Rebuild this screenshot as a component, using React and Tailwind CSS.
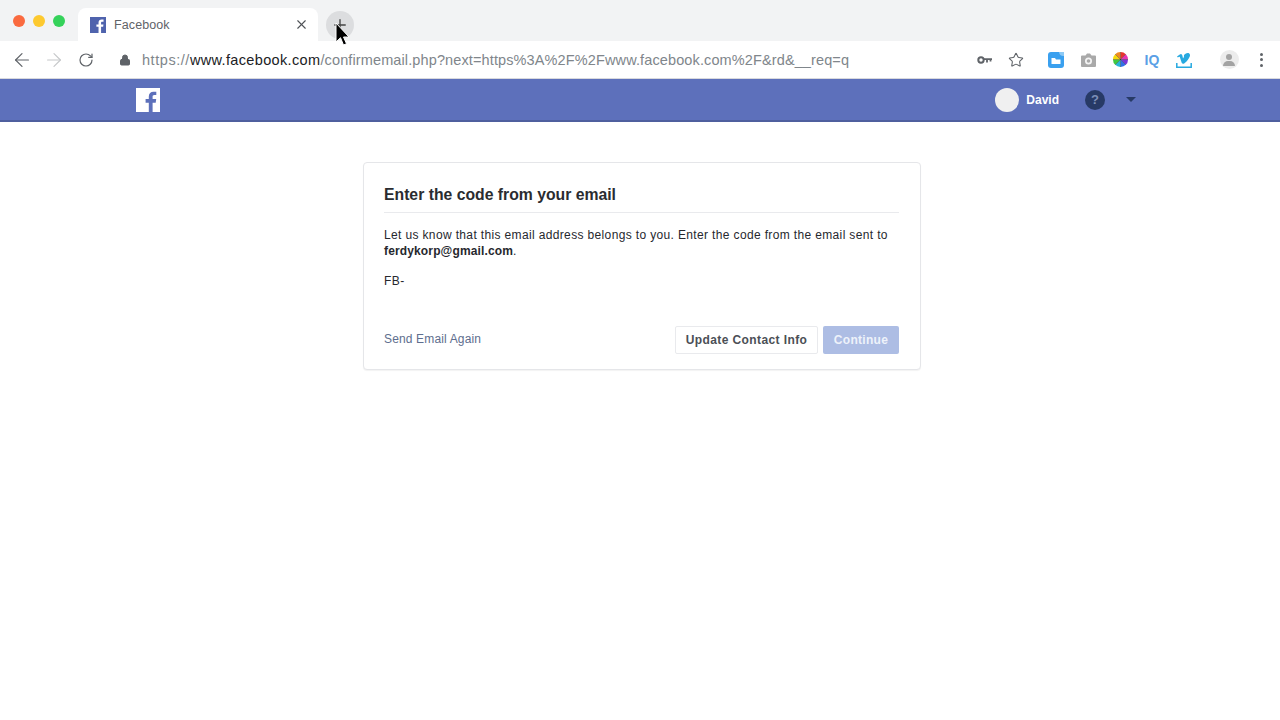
import React from "react";
import { ArrowLeft, ArrowRight, RotateCw, Lock, Star, X, Plus } from "lucide-react";

const sans = "font-['Liberation_Sans',Arial,sans-serif]";

const FbGlyph = ({ className, color }) => (
  <svg viewBox="0 0 24 24" className={className}>
    <rect width="24" height="24" fill="currentColor" />
    <path
      d="M16.600 24v-9.300h3.100l.5-3.600h-3.600V8.800c0-1 .3-1.800 1.800-1.800h1.900V3.800c-.3 0-1.500-.1-2.800-.1-2.800 0-4.700 1.700-4.700 4.800v2.600H9.600v3.600h3.200V24z"
      fill={color}
    />
  </svg>
);

const ColorWheel = () => (
  <svg viewBox="0 0 16 16" className="w-[15px] h-[15px]">
    <path d="M8 8V0a8 8 0 0 1 5.700 2.300z" fill="#e8342f" />
    <path d="M8 8l5.700-5.700A8 8 0 0 1 16 8z" fill="#e834b4" />
    <path d="M8 8h8a8 8 0 0 1-2.300 5.700z" fill="#7a35d8" />
    <path d="M8 8l5.700 5.700A8 8 0 0 1 8 16z" fill="#2f6fe8" />
    <path d="M8 8v8a8 8 0 0 1-5.700-2.300z" fill="#27b5d8" />
    <path d="M8 8l-5.700 5.700A8 8 0 0 1 0 8z" fill="#3fc83f" />
    <path d="M8 8H0a8 8 0 0 1 2.300-5.700z" fill="#f5d90a" />
    <path d="M8 8L2.300 2.300A8 8 0 0 1 8 0z" fill="#f08a24" />
    <path d="M8 0v16M0 8h16M2.300 2.300l11.400 11.400M13.700 2.300L2.300 13.700" stroke="#222" strokeWidth="0.4" />
  </svg>
);

const Slot = ({ className = "", children }) => (
  <div className={`w-[32px] flex items-center justify-center ${className}`}>{children}</div>
);

const Toolbar = () => (
  <div className="h-[38px] bg-white flex items-center border-b border-[#d8d9de]">
    <div className="flex items-center w-[119px] pl-[11px] gap-[10px]">
      <ArrowLeft size={22} className="text-[#5f6368]" strokeWidth={1.3} />
      <ArrowRight size={22} className="text-[#c6c8ca]" strokeWidth={1.3} />
      <RotateCw size={16} className="text-[#5f6368] ml-[3px]" strokeWidth={1.8} />
    </div>
    <Lock size={12} className="text-[#5f6368] fill-[#5f6368]" />
    <div className={`ml-[11px] mt-[2px] text-[14.500px] text-[#80868b] whitespace-nowrap ${sans}`}>
      <span className="tracking-[0.55px]">https://</span>
      <span className="text-[#202124] tracking-[0.35px]">www.facebook.com</span>
      <span className="tracking-[0.12px]">/confirmemail.php?next=https%3A%2F%2Fwww.facebook.com%2F&amp;rd&amp;__req=q</span>
    </div>
    <div className="ml-auto flex items-center pr-[3px]">
      <Slot>
        <svg viewBox="0 0 15 10" className="w-[15px] h-[10px]" fill="none" stroke="#5f6368">
          <circle cx="4" cy="5" r="2.700" strokeWidth="2" />
          <path d="M6.500 4.200H15M10 4v3.500M13.500 4v2.500" strokeWidth="1.800" />
        </svg>
      </Slot>
      <Slot>
        <Star size={16} className="text-[#5f6368]" strokeWidth={1.6} />
      </Slot>
      <Slot className="ml-[8px]">
        <svg viewBox="0 0 16 16" className="w-[16px] h-[16px]">
          <path d="M3 0h13v13a3 3 0 0 1-3 3H3a3 3 0 0 1-3-3V3a3 3 0 0 1 3-3z" fill="#3aa0ef" />
          <path d="M11 0h5v4c-2.500.5-5-1.500-5-4z" fill="#8cc9f5" />
          <path d="M3.500 6h3.500l1 1.500h4.500v4.500H3.500z" fill="#fff" />
        </svg>
      </Slot>
      <Slot>
        <svg viewBox="0 0 15 14" className="w-[15px] h-[14px]">
          <path d="M1 2.500h3.500L6 .5h3l1.500 2H14a1 1 0 0 1 1 1V13a1 1 0 0 1-1 1H1a1 1 0 0 1-1-1V3.500a1 1 0 0 1 1-1z" fill="#a9a9a9" />
          <circle cx="7.500" cy="8" r="3.500" fill="#f4f4f4" />
          <circle cx="7.500" cy="8" r="1.800" fill="#a9a9a9" />
        </svg>
      </Slot>
      <Slot>
        <ColorWheel />
      </Slot>
      <Slot>
        <span className={`text-[14px] font-bold text-[#5a9fe6] leading-none ${sans}`}>IQ</span>
      </Slot>
      <Slot>
        <svg viewBox="0 0 16 16" className="w-[16px] h-[16px]">
          <path d="M1 4.500c2-1.600 3.200-2.500 4-2.500 1.400 0 1.500 2.200 2 4.500.8-1.200 1.300-2 .9-3.200C9 1 13.500-.4 14 3c.3 2.400-3.500 7-5.800 8.500-2 1-2.500-.5-3-2.200L3.800 5c-.5-.8-1.300.1-1.900.4z" fill="#27a9e0" />
          <path d="M.8 11v4.200h14.400V11" fill="none" stroke="#27a9e0" strokeWidth="1.500" />
        </svg>
      </Slot>
      <Slot className="ml-[13px]">
        <div className="w-[19px] h-[19px] rounded-full bg-[#ececec] flex flex-col items-center justify-center">
          <div className="w-[6px] h-[6px] rounded-full bg-[#a3a3a3]" />
          <div className="w-[12px] h-[5px] mt-[1px] rounded-t-full bg-[#a3a3a3]" />
        </div>
      </Slot>
      <Slot>
        <div className="flex flex-col gap-[2.500px]">
          <div className="w-[3px] h-[3px] rounded-full bg-[#5f6368]" />
          <div className="w-[3px] h-[3px] rounded-full bg-[#5f6368]" />
          <div className="w-[3px] h-[3px] rounded-full bg-[#5f6368]" />
        </div>
      </Slot>
    </div>
  </div>
);

const TabStrip = () => (
  <div className="h-[41px] bg-[#f2f3f4] flex items-end relative">
    <div className="flex gap-[8px] pl-[12.500px] pr-[13.500px] self-center">
      <div className="w-[12px] h-[12px] rounded-full bg-[#fa6a3f]" />
      <div className="w-[12px] h-[12px] rounded-full bg-[#fdc92f]" />
      <div className="w-[12px] h-[12px] rounded-full bg-[#35d25a]" />
    </div>
    <div className="w-[240px] h-[33px] bg-white rounded-t-[8px] flex items-center pl-[12px] pr-[9px]">
      <FbGlyph className="w-[16px] h-[16px] text-[#4f63ad]" color="#ffffff" />
      <span className={`ml-[8px] mt-[1px] text-[12.500px] text-[#5f6368] tracking-[0.1px] ${sans}`}>Facebook</span>
      <X size={15} className="ml-auto text-[#4f5357]" strokeWidth={1.800} />
    </div>
    <div className="ml-[8px] mb-[2px] w-[28px] h-[28px] rounded-full bg-[#dcdddf] flex items-center justify-center">
      <Plus size={18} className="text-[#444]" strokeWidth={1.800} />
    </div>
    {/* mouse pointer sitting over the new tab button */}
    <svg viewBox="0 0 14 24" className="absolute left-[335px] top-[22px] w-[14px] h-[24px]">
      <path d="M1 1v19l4.500-4.300L8.500 23l3-1.300-3-6.700H14z" fill="#000" stroke="#fff" strokeWidth="1" />
    </svg>
  </div>
);

const Header = () => (
  <div className="h-[43px] bg-[#5d70bb] border-b-2 border-[#4f5f9e] flex items-center pl-[136px] pr-[144px]">
    <FbGlyph className="w-[24px] h-[24px] text-white" color="#5d70bb" />
    <div className="ml-auto flex items-center">
      <div className="w-[24px] h-[24px] rounded-full bg-[#f0f0f0]" />
      <span className={`ml-[7px] text-[12px] font-bold text-white ${sans}`}>David</span>
      <div className={`ml-[26px] w-[20px] h-[20px] rounded-full bg-[#273a66] flex items-center justify-center text-[13px] font-bold text-[#7d8fb8] ${sans}`}>?</div>
      <div className="ml-[21px] w-0 h-0 border-x-[5px] border-x-transparent border-t-[5px] border-t-[#273a66]" />
    </div>
  </div>
);

const Card = () => (
  <div className={`ml-[363px] mt-[40px] w-[558px] h-[208px] bg-white border border-[#e5e6e9] rounded-[4px] shadow-[0_1px_1px_rgba(0,0,0,0.05)] pl-[20px] pr-[21px] pt-[20px] ${sans}`}>
    <div className="h-[30px] border-b border-[#e9eaed] text-[15.750px] font-bold text-[#2a2c30] leading-[23px]">
      Enter the code from your email
    </div>
    <p className="mt-[14px] text-[12px] leading-[16px] tracking-[0.355px] text-[#26282e]">
      Let us know that this email address belongs to you. Enter the code from the email sent to{" "}
      <span className="font-bold tracking-[0.14px]">ferdykorp@gmail.com</span>.
    </p>
    <div className="mt-[14px] text-[12px] leading-[16px] tracking-[0.4px] text-[#26282e]">FB-</div>
    <div className="mt-[37px] flex items-center">
      <span className="text-[12px] tracking-[0.15px] text-[#5e6e8e] -mt-[2px]">Send Email Again</span>
      <div className="ml-auto flex gap-[5px]">
        <div className="h-[28px] w-[143px] bg-white border border-[#e9eaed] rounded-[2px] flex items-center justify-center text-[12px] font-bold tracking-[0.4px] text-[#4b4f56]">
          Update Contact Info
        </div>
        <div className="h-[28px] w-[76px] bg-[#adbde4] rounded-[2px] flex items-center justify-center text-[12px] font-bold tracking-[0.3px] text-[#eef2fa]">
          Continue
        </div>
      </div>
    </div>
  </div>
);

export default function App() {
  return (
    <div className="w-[1280px] h-[720px] bg-white overflow-hidden">
      <TabStrip />
      <Toolbar />
      <Header />
      <Card />
    </div>
  );
}
